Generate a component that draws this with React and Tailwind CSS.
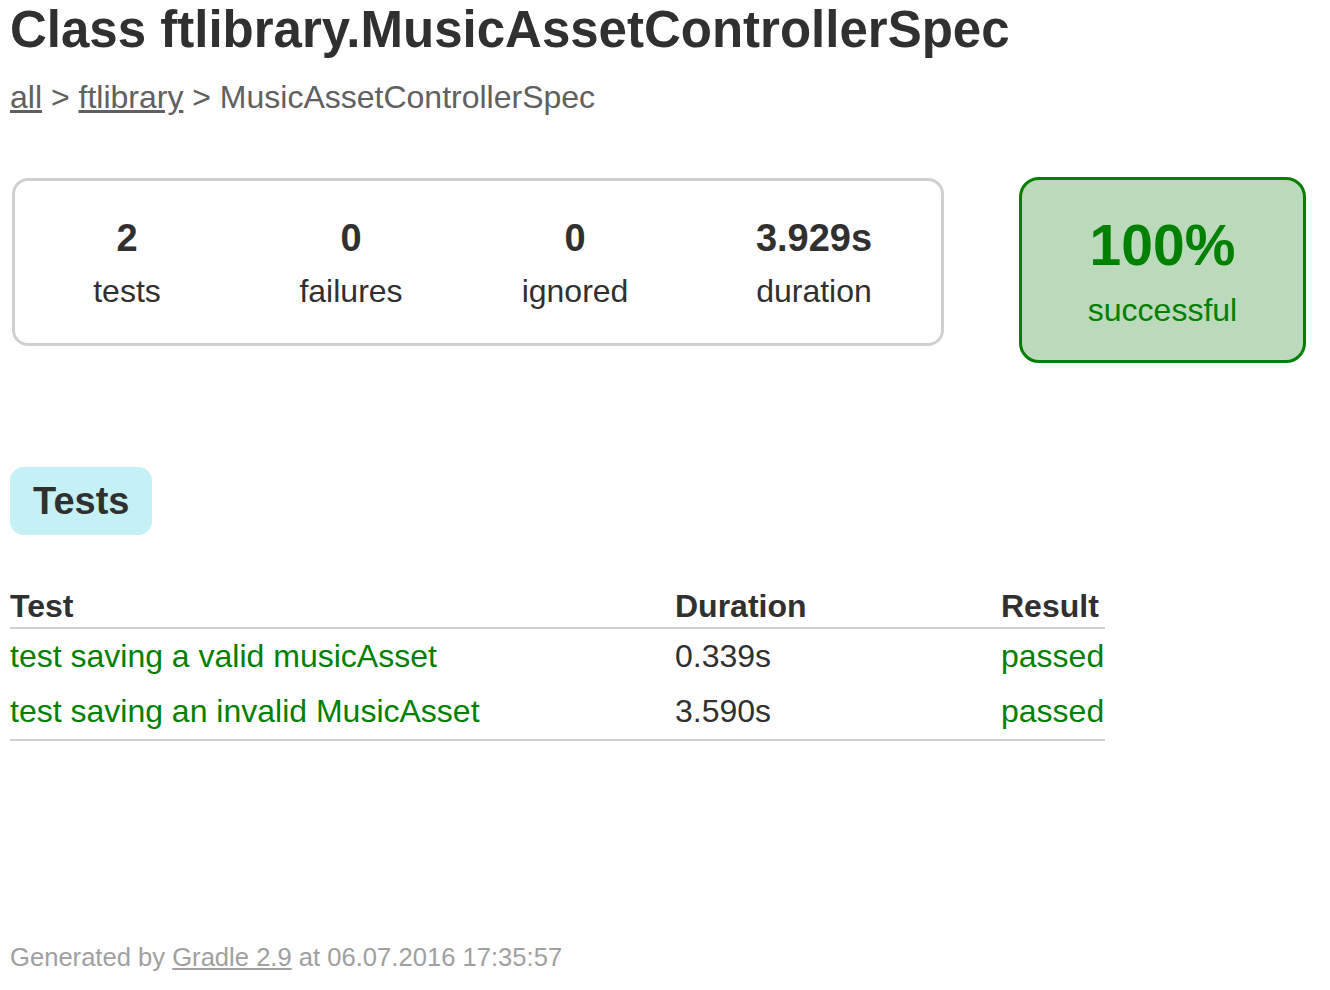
import React from "react";

const counters = [
  { value: "2", label: "tests", width: "w-[224px]" },
  { value: "0", label: "failures", width: "w-[224px]" },
  { value: "0", label: "ignored", width: "w-[224px]" },
  { value: "3.929s", label: "duration", width: "w-[254px]" },
];

const tests = [
  { name: "test saving a valid musicAsset", duration: "0.339s", result: "passed" },
  { name: "test saving an invalid MusicAsset", duration: "3.590s", result: "passed" },
];

const InfoBox = ({ value, label, width }) => (
  <div className={`${width} flex flex-col items-center pt-[34px] pb-[32px]`}>
    <p className="text-[38px] font-bold leading-[46px] mb-[10px]">{value}</p>
    <p className="text-[32px] leading-[40px]">{label}</p>
  </div>
);

export default function App() {
  return (
    <div
      className="px-[10px] text-[#303030] bg-white min-h-[990px]"
      style={{ fontFamily: '"Liberation Sans", Arial, sans-serif' }}
    >
      <h1 className="text-[51px] font-bold leading-[58px] pt-[1px]">
        Class ftlibrary.MusicAssetControllerSpec
      </h1>
      <div className="text-[32px] leading-[40px] text-[#606060] mt-[18px]">
        <a className="underline text-[#606060]">all</a> &gt;{" "}
        <a className="underline text-[#606060]">ftlibrary</a> &gt; MusicAssetControllerSpec
      </div>

      <div className="flex items-start mt-[61px]">
        <div className="ml-[2px] flex border-[3px] border-[#d0d0d0] rounded-[16px]">
          {counters.map((c) => (
            <InfoBox key={c.label} {...c} />
          ))}
        </div>
        <div className="ml-[75px] w-[287px] h-[186px] -mt-[1px] flex flex-col items-center justify-center pt-[2px] border-[3px] border-[#008000] bg-[#bbd9bb] rounded-[20px] text-[#008000]">
          <p className="text-[57px] font-bold leading-[66px] mb-[12px]">100%</p>
          <p className="text-[32px] leading-[40px]">successful</p>
        </div>
      </div>

      <div className="mt-[104px] inline-block bg-[#c5f0f5] rounded-[14px] px-[23px] py-[11px]">
        <h2 className="text-[38px] font-bold leading-[46px]">Tests</h2>
      </div>

      <table className="mt-[47px] border-collapse w-[1095px]">
        <thead>
          <tr className="border-b-2 border-[#d0d0d0]">
            <th className="text-left font-bold text-[32px] leading-[40px] w-[665px] p-0 pt-[4px] pb-[1px]">Test</th>
            <th className="text-left font-bold text-[32px] leading-[40px] w-[326px] p-0 pt-[4px] pb-[1px]">Duration</th>
            <th className="text-left font-bold text-[32px] leading-[40px] p-0 pt-[4px] pb-[1px]">Result</th>
          </tr>
        </thead>
        <tbody className="border-b-2 border-[#d0d0d0]">
          {tests.map((t) => (
            <tr key={t.name}>
              <td className="text-[32px] leading-[40px] pt-[7px] pb-[8px] text-[#008000]">{t.name}</td>
              <td className="text-[32px] leading-[40px] pt-[7px] pb-[8px]">{t.duration}</td>
              <td className="text-[32px] leading-[40px] pt-[7px] pb-[8px] text-[#008000]">{t.result}</td>
            </tr>
          ))}
        </tbody>
      </table>

      <div className="mt-[200px] text-[25.6px] leading-[32px] text-[#a0a0a0]">
        Generated by <a className="underline text-[#a0a0a0]">Gradle 2.9</a> at 06.07.2016 17:35:57
      </div>
    </div>
  );
}
